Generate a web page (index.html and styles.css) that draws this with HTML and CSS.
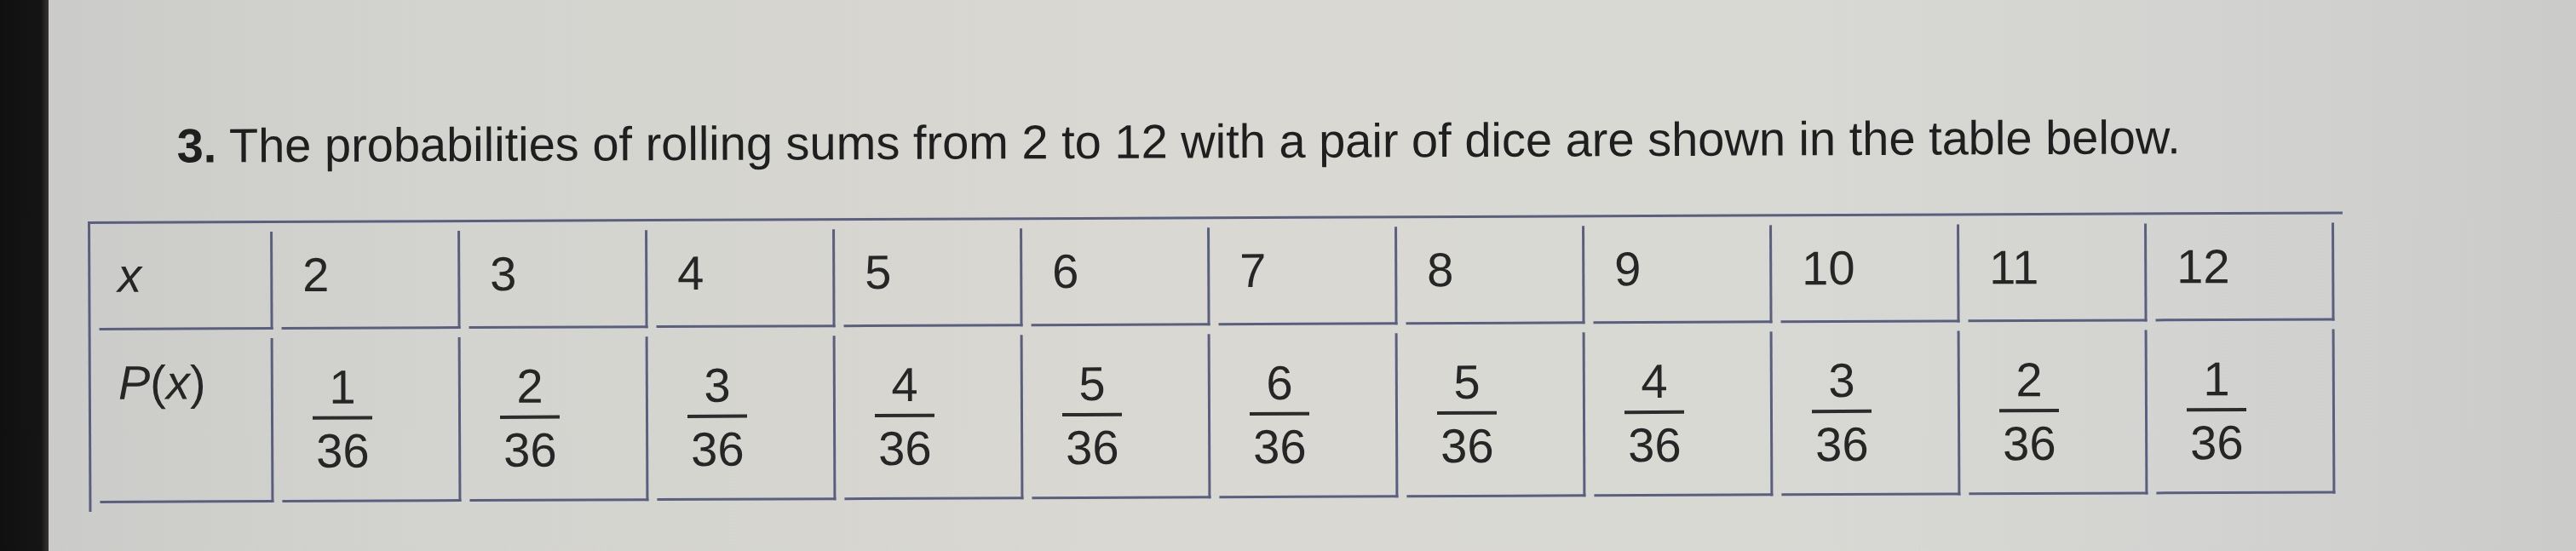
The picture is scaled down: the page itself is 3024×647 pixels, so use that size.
FILE: index.html
```html
<!DOCTYPE html>
<html lang="en">
<head>
<meta charset="utf-8">
<title>Dice probabilities</title>
<link rel="stylesheet" href="styles.css">
</head>
<body>
<div class="bezel"></div>
<main class="screen">
  <div class="sheet">
    <p class="question"><b>3.</b> The probabilities of rolling sums from 2 to 12 with a pair of dice are shown in the table below.</p>
    <table class="prob">
      <tr class="row-x">
        <td class="head"><i>x</i></td>
        <td>2</td><td>3</td><td>4</td><td>5</td><td>6</td><td>7</td><td>8</td><td>9</td><td>10</td><td>11</td><td>12</td>
      </tr>
      <tr class="row-p">
        <td class="head"><i>P</i>(<i>x</i>)</td>
        <td><div class="frac"><span class="num">1</span><span class="bar"></span><span class="den">36</span></div></td>
        <td><div class="frac"><span class="num">2</span><span class="bar"></span><span class="den">36</span></div></td>
        <td><div class="frac"><span class="num">3</span><span class="bar"></span><span class="den">36</span></div></td>
        <td><div class="frac"><span class="num">4</span><span class="bar"></span><span class="den">36</span></div></td>
        <td><div class="frac"><span class="num">5</span><span class="bar"></span><span class="den">36</span></div></td>
        <td><div class="frac"><span class="num">6</span><span class="bar"></span><span class="den">36</span></div></td>
        <td><div class="frac"><span class="num">5</span><span class="bar"></span><span class="den">36</span></div></td>
        <td><div class="frac"><span class="num">4</span><span class="bar"></span><span class="den">36</span></div></td>
        <td><div class="frac"><span class="num">3</span><span class="bar"></span><span class="den">36</span></div></td>
        <td><div class="frac"><span class="num">2</span><span class="bar"></span><span class="den">36</span></div></td>
        <td><div class="frac"><span class="num">1</span><span class="bar"></span><span class="den">36</span></div></td>
      </tr>
    </table>
  </div>
</main>
</body>
</html>
```

FILE: styles.css
```css
html, body {
  margin: 0;
  padding: 0;
  height: 100%;
}
body {
  display: flex;
  width: 3024px;
  height: 647px;
  overflow: hidden;
  background: #d4d4d0;
  font-family: "Liberation Sans", Arial, sans-serif;
  color: #222222;
}
.bezel {
  flex: 0 0 57px;
  background: linear-gradient(90deg, #101010 0%, #161515 85%, #3a3532 100%);
}
.screen {
  flex: 1;
  background: linear-gradient(90deg, #cbcbc9 0%, #d3d3cf 15%, #d9d8d2 45%, #d9d9d4 65%, #d3d4d1 85%, #cbccca 100%);
}
.sheet {
  padding: 141px 0 0 46px;
  transform: rotate(-0.25deg);
  transform-origin: 46px 260px;
}
.question {
  margin: 0 0 57px 105px;
  font-size: 56px;
  line-height: 62px;
  color: #1f1f1f;
  white-space: nowrap;
}
.question b {
  font-weight: 700;
}
.prob {
  border-collapse: separate;
  border-spacing: 10px;
  border-top: 3px solid #5a5f80;
  border-left: 3px solid #5a5f80;
  table-layout: fixed;
  width: 2647px;
  font-size: 56px;
  color: #262626;
}
.prob td {
  box-sizing: border-box;
  border-right: 3px solid #5a5f80;
  border-bottom: 3px solid #5a5f80;
  padding: 19px 0 0 25px;
  vertical-align: top;
  line-height: 64px;
  width: 210px;
}
.prob td.head {
  width: 204px;
  padding-left: 22px;
}
.row-p td.head {
  padding-top: 20px;
}
.row-x td {
  height: 115px;
}
.row-p td {
  height: 193px;
}
.frac {
  display: flex;
  flex-direction: column;
  align-items: center;
  width: fit-content;
  margin: 17px 0 0 15px;
}
.num, .den {
  line-height: 44px;
}
.bar {
  align-self: stretch;
  height: 4px;
  margin: 12px -4px 15px;
  background: #2c2c2c;
}
```
